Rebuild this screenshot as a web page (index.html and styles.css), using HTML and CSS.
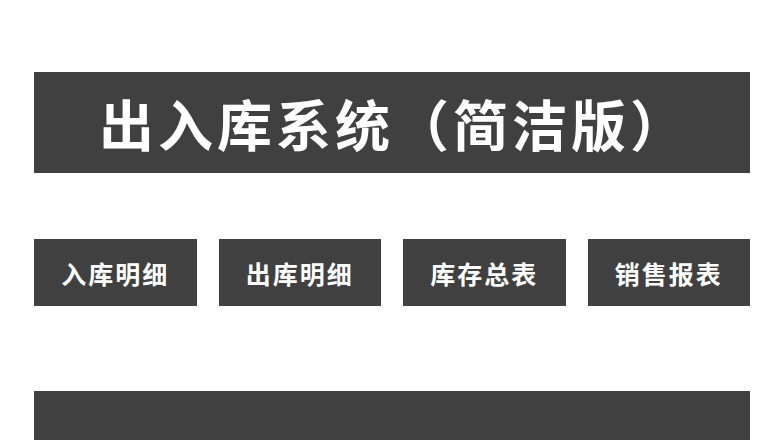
FILE: index.html
```html
<!DOCTYPE html>
<html lang="zh-CN">
<head>
  <meta charset="UTF-8">
  <title>出入库系统（简洁版）</title>
  <link rel="stylesheet" href="styles.css">
</head>
<body>

  <div class="page">
    <div class="title-bar">
      <h1>出入库系统（简洁版）</h1>
    </div>

    <div class="menu">
      <a class="menu-btn" href="#">入库明细</a>
      <a class="menu-btn" href="#">出库明细</a>
      <a class="menu-btn" href="#">库存总表</a>
      <a class="menu-btn" href="#">销售报表</a>
    </div>

    <div class="footer-bar"></div>
  </div>

</body>
</html>
```

FILE: styles.css
```css
body {
  margin: 0;
  background-color: #fff;
  font-family: "Noto Sans CJK SC", "Noto Sans", sans-serif;
}
.page {
  width: 716px;
  margin-left: 34px;
  padding-top: 72px;
}
.title-bar {
  background-color: #404040;
  height: 101px;
  display: flex;
  align-items: center;
  padding-left: 65px;
}
.title-bar h1 {
  margin: 0;
  color: #fff;
  font-size: 55px;
  font-weight: 700;
  letter-spacing: 4px;
  line-height: 1;
}
.menu {
  display: flex;
  gap: 22px;
  margin-top: 66px;
}
.menu-btn {
  flex: 1;
  height: 67px;
  background-color: #404040;
  color: #fff;
  text-decoration: none;
  font-size: 25px;
  font-weight: 700;
  letter-spacing: 2px;
  display: flex;
  align-items: center;
  justify-content: center;
}
.footer-bar {
  background-color: #404040;
  height: 49px;
  margin-top: 85px;
}
```
